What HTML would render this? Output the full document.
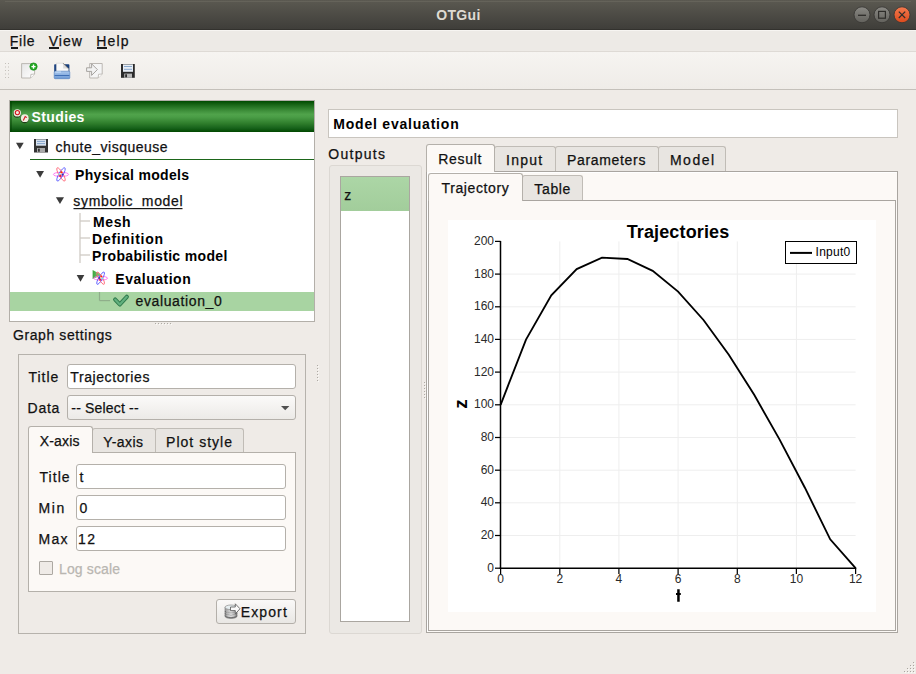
<!DOCTYPE html>
<html><head><meta charset="utf-8">
<style>
html,body{margin:0;padding:0;}
body{width:916px;height:674px;overflow:hidden;position:relative;background:#efebe7;font-family:"Liberation Sans",sans-serif;}
.abs{position:absolute;}
.t{position:absolute;white-space:pre;font-family:"Liberation Sans",sans-serif;}
.box{position:absolute;box-sizing:border-box;}
</style></head><body>
<!-- title bar -->
<div class="box" style="left:0;top:0;width:916px;height:30px;background:linear-gradient(#5b5951,#3e3d39);"></div><div class="box" style="left:5px;top:1px;width:906px;height:1px;background:#65635a;"></div><div class="box" style="left:0;top:29px;width:916px;height:1px;background:#33322e;"></div>
<!-- menubar -->
<div class="box" style="left:0;top:30px;width:916px;height:21px;background:#edeae6;border-top:1px solid #f7f5f2;"></div>
<div class="box" style="left:10.5px;top:47px;width:7px;height:1.5px;background:#1a1a1a;"></div>
<div class="box" style="left:49.2px;top:47px;width:9.6px;height:1.5px;background:#1a1a1a;"></div>
<div class="box" style="left:97px;top:47px;width:10px;height:1.5px;background:#1a1a1a;"></div>
<!-- toolbar -->
<div class="box" style="left:0;top:51px;width:916px;height:39px;background:linear-gradient(#f6f4f1,#efece8);border-top:1px solid #dedad5;border-bottom:1px solid #c4c0ba;"></div>

<!-- tree -->
<div class="box" style="left:9px;top:100px;width:306px;height:222px;background:#fff;border:1px solid #b3afa9;"></div>
<div class="box" style="left:10px;top:101px;width:304px;height:31px;background:linear-gradient(#004a00 0%,#1d6a1b 14%,#3f903b 32%,#50a34b 43%,#4a9d46 52%,#2f7e2c 72%,#16611a 88%,#004800 100%);"></div><div class="box" style="left:10px;top:101px;width:2px;height:31px;background:rgba(0,60,0,0.45);"></div>
<div class="box" style="left:30px;top:159px;width:284px;height:1px;background:#1d661a;"></div>
<div class="box" style="left:10px;top:292px;width:304px;height:19px;background:#a8d4a2;"></div>

<!-- groupbox -->
<div class="box" style="left:18px;top:354px;width:288px;height:280px;border:1px solid #b6b2ac;"></div>

<!-- right -->
<div class="box" style="left:328px;top:109px;width:570px;height:29px;background:#fff;border:1px solid #c9c5bf;"></div>


<!-- window buttons -->
<svg class="abs" style="left:846px;top:0" width="70" height="30" viewBox="846 0 70 30">
 <defs>
  <linearGradient id="gb" x1="0" y1="0" x2="0" y2="1"><stop offset="0" stop-color="#8a8984"/><stop offset="1" stop-color="#62615c"/></linearGradient>
  <linearGradient id="go" x1="0" y1="0" x2="0" y2="1"><stop offset="0" stop-color="#f47a4e"/><stop offset="1" stop-color="#dc4a1c"/></linearGradient>
 </defs>
 <circle cx="862" cy="14.8" r="8" fill="url(#gb)" stroke="#3a3935" stroke-width="0.9"/>
 <line x1="858" y1="15.3" x2="866" y2="15.3" stroke="#2e2d2a" stroke-width="1.3"/>
 <circle cx="882" cy="14.8" r="8" fill="url(#gb)" stroke="#3a3935" stroke-width="0.9"/>
 <rect x="878.6" y="11.4" width="6.8" height="6.8" fill="none" stroke="#2e2d2a" stroke-width="1.2"/>
 <circle cx="902" cy="14.8" r="8" fill="url(#go)" stroke="#3a3935" stroke-width="0.9"/>
 <path d="M898.8 11.6 L905.2 18 M905.2 11.6 L898.8 18" stroke="#2e2d2a" stroke-width="1.2"/>
</svg>
<!-- toolbar handle -->
<svg class="abs" style="left:0;top:60px" width="14" height="22" viewBox="0 60 14 22">
 <g fill="#c4c0ba"><rect x="5" y="63" width="1" height="1"/><rect x="5" y="66.5" width="1" height="1"/><rect x="5" y="70" width="1" height="1"/><rect x="5" y="73.5" width="1" height="1"/><rect x="5" y="77" width="1" height="1"/><rect x="8" y="63" width="1" height="1"/><rect x="8" y="66.5" width="1" height="1"/><rect x="8" y="70" width="1" height="1"/><rect x="8" y="73.5" width="1" height="1"/><rect x="8" y="77" width="1" height="1"/></g>
</svg>
<!-- toolbar icons -->
<svg class="abs" style="left:20px;top:62px" width="18" height="18" viewBox="20 62 18 18">
 <defs><linearGradient id="pg" x1="0" y1="0" x2="1" y2="1"><stop offset="0" stop-color="#e6e6e6"/><stop offset="1" stop-color="#ffffff"/></linearGradient></defs>
 <path d="M21.6 63.6 H34.6 V74 L30.6 78 H21.6 Z" fill="url(#pg)" stroke="#b5b1ab" stroke-width="0.9"/>
 <path d="M30.6 78 L30.9 74.4 L34.6 74" fill="#fff" stroke="#b5b1ab" stroke-width="0.8"/>
 <circle cx="33.5" cy="66.6" r="3.7" fill="#22a722" stroke="#138a13" stroke-width="0.6"/>
 <path d="M33.5 64.5 V68.7 M31.4 66.6 H35.6" stroke="#fff" stroke-width="1.4"/>
</svg>
<svg class="abs" style="left:52px;top:61px" width="20" height="20" viewBox="52 61 20 20">
 <defs><linearGradient id="fg" x1="0" y1="0" x2="0" y2="1"><stop offset="0" stop-color="#a9c8ee"/><stop offset="1" stop-color="#6b98d4"/></linearGradient></defs>
 <rect x="54.2" y="64.2" width="15.2" height="8" rx="0.8" fill="#173f7e"/>
 <path d="M56.4 63.2 H63.2 L68.4 68.6 V72 H56.4 Z" fill="#f9f9f9" stroke="#c8c8c8" stroke-width="0.5"/>
 <path d="M63.2 63.3 V68.6 H68.4 Z" fill="#d9d9d9"/>
 <path d="M63.2 63.3 L68.4 68.6" stroke="#4a4a4a" stroke-width="0.7"/>
 <rect x="54.2" y="71.2" width="15.6" height="7.5" rx="0.9" fill="url(#fg)" stroke="#4d7cbf" stroke-width="0.6"/>
 <line x1="54.6" y1="75.5" x2="69.4" y2="75.5" stroke="#3f6fb5" stroke-width="1"/>
 <line x1="55.2" y1="72" x2="61" y2="72" stroke="#d6ecff" stroke-width="0.8"/>
</svg>
<svg class="abs" style="left:85px;top:62px" width="19" height="18" viewBox="85 62 19 18">
 <path d="M89.7 63.5 H102.2 V74 L98.2 78 H89.7 Z" fill="#f5f5f5" stroke="#b5b1ab" stroke-width="0.9"/>
 <path d="M98.2 78 L98.5 74.3 L102.2 74" fill="#fff" stroke="#b5b1ab" stroke-width="0.8"/>
 <path d="M86.6 67.8 H91.6 V63.8 L97.4 69.6 L91.6 75.4 V71.4 H86.6 Z" fill="#f2f2f2" stroke="#9f9c97" stroke-width="0.9" stroke-linejoin="round"/>
</svg>
<svg class="abs" style="left:119px;top:62px" width="18" height="18" viewBox="119 62 18 18">
 <path d="M121 64 H134.8 V77.8 H121 Z" fill="#2b2b2b"/>
 <rect x="123" y="64.4" width="10" height="7.4" fill="#e8eef6"/>
 <line x1="124" y1="66.5" x2="132" y2="66.5" stroke="#7fa0c8" stroke-width="0.9"/>
 <line x1="124" y1="69.3" x2="132" y2="69.3" stroke="#7fa0c8" stroke-width="0.9"/>
 <rect x="124.2" y="73.6" width="7.8" height="4.2" fill="#b8b8b8"/>
 <rect x="125.2" y="74.3" width="1.8" height="3" fill="#2b2b2b"/>
</svg>

<!-- tree icons -->
<svg class="abs" style="left:10px;top:101px" width="304" height="220" viewBox="10 101 304 220">
 <!-- studies icon -->
 <circle cx="17.1" cy="113.8" r="3.9" fill="#1b2a14" opacity="0.8"/>
 <circle cx="17.3" cy="112.9" r="3.7" fill="#efeedf"/>
 <circle cx="17.4" cy="112.6" r="2.1" fill="none" stroke="#d4141e" stroke-width="1.1"/>
 <circle cx="24.6" cy="119.1" r="4.1" fill="#1b2a14" opacity="0.8"/>
 <circle cx="24.8" cy="118.2" r="3.9" fill="#efeedf"/>
 <path d="M23.3 120.4 L25.2 116.6 L26.8 117.6" fill="none" stroke="#d4141e" stroke-width="1.1"/>
 <!-- triangles -->
 <g fill="#3b3b3b">
  <path d="M16 142.8 H23.7 L19.85 149.3 Z"/>
  <path d="M36.2 171 H44 L40.1 177.7 Z"/>
  <path d="M55.9 197.3 H64 L59.95 203.9 Z"/>
  <path d="M76.7 275 H84.3 L80.5 281.8 Z"/>
 </g>
 <!-- floppy -->
 <path d="M34 139 H48 V152.5 H34 Z" fill="#333"/>
 <rect x="36" y="139.4" width="10" height="6.3" fill="#dbe4ef"/>
 <line x1="37" y1="141.4" x2="45" y2="141.4" stroke="#6f94c2" stroke-width="0.8"/>
 <line x1="37" y1="143.6" x2="45" y2="143.6" stroke="#6f94c2" stroke-width="0.8"/>
 <rect x="37" y="148" width="8" height="4.5" fill="#a9a9a9"/>
 <rect x="38" y="148.7" width="1.8" height="3" fill="#333"/>
 <!-- atom physical models -->
 <g fill="none" stroke-width="0.85">
  <ellipse cx="61" cy="174.4" rx="7.6" ry="2.1" stroke="#ff66ee"/>
  <ellipse cx="61" cy="174.4" rx="7.6" ry="2.1" stroke="#5a5aff" transform="rotate(-60 61 174.4)"/>
  <ellipse cx="61" cy="174.4" rx="7.6" ry="2.1" stroke="#ff6677" transform="rotate(60 61 174.4)"/>
 </g>
 <circle cx="61.3" cy="172.3" r="1.1" fill="#ff3300"/>
 <circle cx="59.5" cy="174.2" r="1.1" fill="#9be8f0"/>
 <circle cx="62.6" cy="174.6" r="1.1" fill="#2a2acc"/>
 <circle cx="60.4" cy="175.8" r="1.2" fill="#e02040"/>
 <!-- symbolic underline -->
 <rect x="73.5" y="208" width="109" height="1.2" fill="#1a1a1a"/>
 <!-- tree lines -->
 <g stroke="#cfcbc5" stroke-width="1.3">
  <line x1="80" y1="213" x2="80" y2="263"/>
  <line x1="80" y1="221" x2="90" y2="221"/>
  <line x1="80" y1="238" x2="90" y2="238"/>
  <line x1="80" y1="255" x2="90" y2="255"/>
 </g>
 <g stroke="#8fae8a" stroke-width="1.2">
  <line x1="99.5" y1="292" x2="99.5" y2="300.6"/>
  <line x1="99.5" y1="300.6" x2="110" y2="300.6"/>
 </g>
 <!-- evaluation icon -->
 <defs><linearGradient id="tg" x1="0" y1="0" x2="1" y2="0"><stop offset="0" stop-color="#3aa53a"/><stop offset="1" stop-color="#8fd08f"/></linearGradient></defs>
 <path d="M92.6 270 L92.6 279 L102 275 Z" fill="url(#tg)"/>
 <g fill="none" stroke-width="0.85">
  <ellipse cx="100.6" cy="278.2" rx="7" ry="1.9" stroke="#ff66ee"/>
  <ellipse cx="100.6" cy="278.2" rx="7" ry="1.9" stroke="#5a5aff" transform="rotate(-60 100.6 278.2)"/>
  <ellipse cx="100.6" cy="278.2" rx="7" ry="1.9" stroke="#ff6677" transform="rotate(60 100.6 278.2)"/>
 </g>
 <circle cx="101.2" cy="276.4" r="1.0" fill="#ff3300"/>
 <circle cx="99.3" cy="278" r="1.0" fill="#2a2acc"/>
 <circle cx="102.2" cy="278.4" r="1.0" fill="#7ad8f0"/>
 <circle cx="100.3" cy="279.6" r="1.1" fill="#e02040"/>
 <!-- check icon -->
 <polyline points="115.2,299.6 119.8,304.4 126.8,296.8" fill="none" stroke="#2f7a4c" stroke-width="4.2" stroke-linejoin="round" stroke-linecap="round"/>
 <polyline points="115.2,299.6 119.8,304.4 126.8,296.8" fill="none" stroke="#62b07e" stroke-width="2.2" stroke-linejoin="round" stroke-linecap="round"/>
</svg>
<!-- splitter dots -->
<svg class="abs" style="left:0;top:0" width="916" height="674" viewBox="0 0 916 674"><rect x="156" y="324" width="1" height="1" fill="#fbfaf8"/><rect x="155" y="323" width="1" height="1" fill="#aeaaa4"/><rect x="159" y="324" width="1" height="1" fill="#fbfaf8"/><rect x="158" y="323" width="1" height="1" fill="#aeaaa4"/><rect x="162" y="324" width="1" height="1" fill="#fbfaf8"/><rect x="161" y="323" width="1" height="1" fill="#aeaaa4"/><rect x="165" y="324" width="1" height="1" fill="#fbfaf8"/><rect x="164" y="323" width="1" height="1" fill="#aeaaa4"/><rect x="168" y="324" width="1" height="1" fill="#fbfaf8"/><rect x="167" y="323" width="1" height="1" fill="#aeaaa4"/><rect x="171" y="324" width="1" height="1" fill="#fbfaf8"/><rect x="170" y="323" width="1" height="1" fill="#aeaaa4"/><rect x="318" y="366" width="1" height="1" fill="#fbfaf8"/><rect x="317" y="365" width="1" height="1" fill="#aeaaa4"/><rect x="318" y="369" width="1" height="1" fill="#fbfaf8"/><rect x="317" y="368" width="1" height="1" fill="#aeaaa4"/><rect x="318" y="372" width="1" height="1" fill="#fbfaf8"/><rect x="317" y="371" width="1" height="1" fill="#aeaaa4"/><rect x="318" y="375" width="1" height="1" fill="#fbfaf8"/><rect x="317" y="374" width="1" height="1" fill="#aeaaa4"/><rect x="318" y="378" width="1" height="1" fill="#fbfaf8"/><rect x="317" y="377" width="1" height="1" fill="#aeaaa4"/><rect x="318" y="381" width="1" height="1" fill="#fbfaf8"/><rect x="317" y="380" width="1" height="1" fill="#aeaaa4"/><rect x="425" y="383" width="1" height="1" fill="#fbfaf8"/><rect x="424" y="382" width="1" height="1" fill="#aeaaa4"/><rect x="425" y="386" width="1" height="1" fill="#fbfaf8"/><rect x="424" y="385" width="1" height="1" fill="#aeaaa4"/><rect x="425" y="389" width="1" height="1" fill="#fbfaf8"/><rect x="424" y="388" width="1" height="1" fill="#aeaaa4"/><rect x="425" y="392" width="1" height="1" fill="#fbfaf8"/><rect x="424" y="391" width="1" height="1" fill="#aeaaa4"/><rect x="425" y="395" width="1" height="1" fill="#fbfaf8"/><rect x="424" y="394" width="1" height="1" fill="#aeaaa4"/><rect x="425" y="398" width="1" height="1" fill="#fbfaf8"/><rect x="424" y="397" width="1" height="1" fill="#aeaaa4"/></svg>
<!-- graph settings widgets -->
<div class="box" style="left:67px;top:364px;width:229px;height:25px;background:#fff;border:1px solid #b4b0aa;border-radius:3px;"></div>
<div class="box" style="left:67px;top:395px;width:229px;height:25px;background:linear-gradient(#fbfaf9,#eceae7);border:1px solid #b4b0aa;border-radius:3px;"></div>
<svg class="abs" style="left:280px;top:404px" width="10" height="8" viewBox="0 0 10 8"><path d="M1 2 H9.4 L5.2 6.3 Z" fill="#505050"/></svg>
<!-- tab pane -->
<div class="box" style="left:28px;top:452px;width:268px;height:140px;background:#fcf9f6;border:1px solid #b4b0aa;"></div>
<div class="box" style="left:92px;top:428px;width:64px;height:24px;background:#e8e5e1;border:1px solid #c0bcb6;border-bottom:none;border-radius:3px 3px 0 0;"></div>
<div class="box" style="left:155px;top:428px;width:89px;height:24px;background:#e8e5e1;border:1px solid #c0bcb6;border-bottom:none;border-radius:3px 3px 0 0;"></div>
<div class="box" style="left:28px;top:426px;width:65px;height:27px;background:#fcf9f6;border:1px solid #b4b0aa;border-bottom:none;border-radius:3px 3px 0 0;"></div>
<div class="box" style="left:76px;top:464px;width:210px;height:25px;background:#fff;border:1px solid #b4b0aa;border-radius:3px;"></div>
<div class="box" style="left:76px;top:495px;width:210px;height:25px;background:#fff;border:1px solid #b4b0aa;border-radius:3px;"></div>
<div class="box" style="left:76px;top:526px;width:210px;height:25px;background:#fff;border:1px solid #b4b0aa;border-radius:3px;"></div>
<div class="box" style="left:39px;top:561px;width:14px;height:14px;background:#efebe7;border:1px solid #aca8a2;border-radius:1px;"></div>
<!-- export button -->
<div class="box" style="left:216px;top:599px;width:80px;height:25px;background:linear-gradient(#faf9f8,#e9e7e4);border:1px solid #b4b0aa;border-radius:3px;"></div>
<svg class="abs" style="left:222px;top:601px" width="20" height="20" viewBox="222 601 20 20">
 <defs><linearGradient id="dbg" x1="0" y1="0" x2="1" y2="0"><stop offset="0" stop-color="#9a9a9a"/><stop offset="0.5" stop-color="#dcdcdc"/><stop offset="1" stop-color="#8a8a8a"/></linearGradient></defs>
 <path d="M225 607.3 V616.2 A6 2.3 0 0 0 237 616.2 V607.3 Z" fill="url(#dbg)" stroke="#6e6e6e" stroke-width="0.6"/>
 <g stroke="#5e5e5e" stroke-width="0.9" fill="none">
  <path d="M225.2 611.2 A5.8 2.1 0 0 0 236.8 611.2"/>
  <path d="M225.2 613.4 A5.8 2.1 0 0 0 236.8 613.4"/>
  <path d="M225.2 615.6 A5.8 2.1 0 0 0 236.8 615.6"/>
 </g>
 <g stroke="#f4f4f4" stroke-width="0.7" fill="none">
  <path d="M226.5 612.6 A5 1.6 0 0 0 235.5 612.6"/>
  <path d="M226.5 614.8 A5 1.6 0 0 0 235.5 614.8"/>
 </g>
 <ellipse cx="231" cy="607.3" rx="6" ry="2.3" fill="#e6eef0" stroke="#7a7a7a" stroke-width="0.6"/>
 <path d="M230.5 607 H235.3 V603.8 L240 608.8 L235.3 613.8 V610.6 H230.5 Z" fill="#fafafa" stroke="#555" stroke-width="0.8" stroke-linejoin="round"/>
</svg>

<!-- outputs frame -->
<div class="box" style="left:329px;top:165px;width:93px;height:469px;background:#ebe8e4;border:1px solid #dcd8d3;border-radius:3px;"></div>
<div class="box" style="left:340px;top:176px;width:70px;height:446px;background:#fff;border:1px solid #aaa6a0;"></div>
<div class="box" style="left:341px;top:177px;width:68px;height:34px;background:linear-gradient(#acd6a6,#a2cd9b);"></div>

<!-- outer tabs -->
<div class="box" style="left:426px;top:171px;width:472px;height:462px;background:#fcf9f6;border:1px solid #a9a5a0;box-shadow:inset 1px 1px 0 #fff;"></div>
<div class="box" style="left:494px;top:146px;width:62px;height:25px;background:#e8e5e1;border:1px solid #c0bcb6;border-bottom:none;border-radius:3px 3px 0 0;"></div>
<div class="box" style="left:555px;top:146px;width:104px;height:25px;background:#e8e5e1;border:1px solid #c0bcb6;border-bottom:none;border-radius:3px 3px 0 0;"></div>
<div class="box" style="left:658px;top:146px;width:68px;height:25px;background:#e8e5e1;border:1px solid #c0bcb6;border-bottom:none;border-radius:3px 3px 0 0;"></div>
<div class="box" style="left:426px;top:144px;width:69px;height:28px;background:#fcf9f6;border:1px solid #b4b0aa;border-bottom:none;border-radius:3px 3px 0 0;"></div>
<!-- inner tabs -->
<div class="box" style="left:428px;top:200px;width:468px;height:431px;background:#fcf9f6;border:1px solid #a9a5a0;"></div>
<div class="box" style="left:522px;top:175px;width:61px;height:25px;background:#e8e5e1;border:1px solid #c0bcb6;border-bottom:none;border-radius:3px 3px 0 0;"></div>
<div class="box" style="left:428px;top:173px;width:95px;height:28px;background:#fcf9f6;border:1px solid #b4b0aa;border-bottom:none;border-radius:3px 3px 0 0;"></div>
<!-- plot area -->
<div class="box" style="left:448px;top:220px;width:428px;height:392px;background:#fff;"></div>

<!-- size grip -->
<svg class="abs" style="left:900px;top:656px" width="16" height="18" viewBox="900 656 16 18"><rect x="914" y="663" width="1" height="1" fill="#fbfaf8"/><rect x="913" y="662" width="1" height="1" fill="#a9a59f"/><rect x="911" y="666" width="1" height="1" fill="#fbfaf8"/><rect x="910" y="665" width="1" height="1" fill="#a9a59f"/><rect x="914" y="666" width="1" height="1" fill="#fbfaf8"/><rect x="913" y="665" width="1" height="1" fill="#a9a59f"/><rect x="908" y="669" width="1" height="1" fill="#fbfaf8"/><rect x="907" y="668" width="1" height="1" fill="#a9a59f"/><rect x="911" y="669" width="1" height="1" fill="#fbfaf8"/><rect x="910" y="668" width="1" height="1" fill="#a9a59f"/><rect x="914" y="669" width="1" height="1" fill="#fbfaf8"/><rect x="913" y="668" width="1" height="1" fill="#a9a59f"/><rect x="905" y="672" width="1" height="1" fill="#fbfaf8"/><rect x="904" y="671" width="1" height="1" fill="#a9a59f"/><rect x="908" y="672" width="1" height="1" fill="#fbfaf8"/><rect x="907" y="671" width="1" height="1" fill="#a9a59f"/><rect x="911" y="672" width="1" height="1" fill="#fbfaf8"/><rect x="910" y="671" width="1" height="1" fill="#a9a59f"/><rect x="914" y="672" width="1" height="1" fill="#fbfaf8"/><rect x="913" y="671" width="1" height="1" fill="#a9a59f"/></svg>


<svg class='abs' style='left:0;top:0' width='916' height='674' viewBox='0 0 916 674'>
<g stroke='#eeeeee' stroke-width='1'><line x1='559.8' y1='241.4' x2='559.8' y2='568.2'/><line x1='618.9' y1='241.4' x2='618.9' y2='568.2'/><line x1='678.1' y1='241.4' x2='678.1' y2='568.2'/><line x1='737.3' y1='241.4' x2='737.3' y2='568.2'/><line x1='796.4' y1='241.4' x2='796.4' y2='568.2'/><line x1='500.6' y1='535.5' x2='855.6' y2='535.5'/><line x1='500.6' y1='502.8' x2='855.6' y2='502.8'/><line x1='500.6' y1='470.2' x2='855.6' y2='470.2'/><line x1='500.6' y1='437.5' x2='855.6' y2='437.5'/><line x1='500.6' y1='404.8' x2='855.6' y2='404.8'/><line x1='500.6' y1='372.1' x2='855.6' y2='372.1'/><line x1='500.6' y1='339.4' x2='855.6' y2='339.4'/><line x1='500.6' y1='306.8' x2='855.6' y2='306.8'/><line x1='500.6' y1='274.1' x2='855.6' y2='274.1'/></g>
<g stroke='#000' stroke-width='1.25'><line x1='495' y1='568.2' x2='500.6' y2='568.2'/><line x1='495' y1='535.5' x2='500.6' y2='535.5'/><line x1='495' y1='502.8' x2='500.6' y2='502.8'/><line x1='495' y1='470.2' x2='500.6' y2='470.2'/><line x1='495' y1='437.5' x2='500.6' y2='437.5'/><line x1='495' y1='404.8' x2='500.6' y2='404.8'/><line x1='495' y1='372.1' x2='500.6' y2='372.1'/><line x1='495' y1='339.4' x2='500.6' y2='339.4'/><line x1='495' y1='306.8' x2='500.6' y2='306.8'/><line x1='495' y1='274.1' x2='500.6' y2='274.1'/><line x1='495' y1='241.4' x2='500.6' y2='241.4'/><line x1='500.6' y1='568.2' x2='500.6' y2='574'/><line x1='559.8' y1='568.2' x2='559.8' y2='574'/><line x1='618.9' y1='568.2' x2='618.9' y2='574'/><line x1='678.1' y1='568.2' x2='678.1' y2='574'/><line x1='737.3' y1='568.2' x2='737.3' y2='574'/><line x1='796.4' y1='568.2' x2='796.4' y2='574'/><line x1='855.6' y1='568.2' x2='855.6' y2='574'/></g>
<line x1='500.5' y1='241' x2='500.5' y2='568.9' stroke='#000' stroke-width='1.5'/>
<line x1='499.8' y1='568.3' x2='856.3' y2='568.3' stroke='#000' stroke-width='1.5'/>
<polyline points='500.6,404.8 526.0,339.6 551.3,295.4 576.7,269.1 602.0,257.7 627.4,259.0 652.7,270.8 678.1,291.6 703.5,320.0 728.8,354.7 754.2,394.8 779.5,439.4 804.9,487.7 830.2,539.3 855.6,568.2' fill='none' stroke='#000' stroke-width='1.85' stroke-linejoin='miter'/>
<g font-family='Liberation Sans' font-size='12' fill='#2a2a2a'><text x='494' y='571.7' text-anchor='end'>0</text><text x='494' y='539.0' text-anchor='end'>20</text><text x='494' y='506.3' text-anchor='end'>40</text><text x='494' y='473.7' text-anchor='end'>60</text><text x='494' y='441.0' text-anchor='end'>80</text><text x='494' y='408.3' text-anchor='end'>100</text><text x='494' y='375.6' text-anchor='end'>120</text><text x='494' y='342.9' text-anchor='end'>140</text><text x='494' y='310.3' text-anchor='end'>160</text><text x='494' y='277.6' text-anchor='end'>180</text><text x='494' y='244.9' text-anchor='end'>200</text><text x='500.6' y='582.8' text-anchor='middle'>0</text><text x='559.8' y='582.8' text-anchor='middle'>2</text><text x='618.9' y='582.8' text-anchor='middle'>4</text><text x='678.1' y='582.8' text-anchor='middle'>6</text><text x='737.3' y='582.8' text-anchor='middle'>8</text><text x='796.4' y='582.8' text-anchor='middle'>10</text><text x='855.6' y='582.8' text-anchor='middle'>12</text></g>
<rect x='785.5' y='241.5' width='71' height='22' fill='#fff' stroke='#000' stroke-width='1'/>
<line x1='790' y1='252.9' x2='812' y2='252.9' stroke='#000' stroke-width='2'/>
<path d='M677.2 589.3 H679.7 V601.7 H677.2 Z M676 593.1 H680.8 V594.9 H676 Z' fill='#000'/>
<text transform='translate(467.1 403.9) rotate(-90)' x='0' y='0' text-anchor='middle' font-family='Liberation Sans' font-weight='bold' font-size='19' fill='#000'>z</text>
</svg>
<div class='t' style='left:436.2px;top:7.85px;font-size:14px;line-height:14px;font-weight:700;color:#dfdbd2;letter-spacing:0.330px;'>OTGui</div>
<div class='t' style='left:9.7px;top:33.75px;font-size:14px;line-height:14px;font-weight:400;color:#111;letter-spacing:0.779px;-webkit-text-stroke:0.25px currentColor;'>File</div>
<div class='t' style='left:48.7px;top:33.75px;font-size:14px;line-height:14px;font-weight:400;color:#111;letter-spacing:1.002px;-webkit-text-stroke:0.25px currentColor;'>View</div>
<div class='t' style='left:96.3px;top:33.75px;font-size:14px;line-height:14px;font-weight:400;color:#111;letter-spacing:1.168px;-webkit-text-stroke:0.25px currentColor;'>Help</div>
<div class='t' style='left:31.6px;top:110.05px;font-size:14px;line-height:14px;font-weight:700;color:#ffffff;letter-spacing:0.370px;'>Studies</div>
<div class='t' style='left:55.5px;top:139.95px;font-size:14px;line-height:14px;font-weight:400;color:#111;letter-spacing:0.502px;-webkit-text-stroke:0.25px currentColor;'>chute_visqueuse</div>
<div class='t' style='left:75.1px;top:168.45px;font-size:14px;line-height:14px;font-weight:700;color:#000;letter-spacing:0.299px;'>Physical models</div>
<div class='t' style='left:73.3px;top:194.05px;font-size:14px;line-height:14px;font-weight:400;color:#111;letter-spacing:0.694px;-webkit-text-stroke:0.25px currentColor;'>symbolic_model</div>
<div class='t' style='left:93.1px;top:214.95px;font-size:14px;line-height:14px;font-weight:700;color:#000;letter-spacing:0.568px;'>Mesh</div>
<div class='t' style='left:92.1px;top:232.15px;font-size:14px;line-height:14px;font-weight:700;color:#000;letter-spacing:0.706px;'>Definition</div>
<div class='t' style='left:92.1px;top:249.15px;font-size:14px;line-height:14px;font-weight:700;color:#000;letter-spacing:0.337px;'>Probabilistic model</div>
<div class='t' style='left:115.3px;top:271.75px;font-size:14px;line-height:14px;font-weight:700;color:#000;letter-spacing:0.511px;'>Evaluation</div>
<div class='t' style='left:135.5px;top:294.15px;font-size:14px;line-height:14px;font-weight:400;color:#111;letter-spacing:0.627px;-webkit-text-stroke:0.25px currentColor;'>evaluation_0</div>
<div class='t' style='left:12.9px;top:328.45px;font-size:14px;line-height:14px;font-weight:400;color:#111;letter-spacing:0.603px;-webkit-text-stroke:0.25px currentColor;'>Graph settings</div>
<div class='t' style='left:28.5px;top:369.75px;font-size:14px;line-height:14px;font-weight:400;color:#111;letter-spacing:0.991px;-webkit-text-stroke:0.25px currentColor;'>Title</div>
<div class='t' style='left:70.3px;top:369.75px;font-size:14px;line-height:14px;font-weight:400;color:#111;letter-spacing:0.589px;-webkit-text-stroke:0.25px currentColor;'>Trajectories</div>
<div class='t' style='left:27.5px;top:400.75px;font-size:14px;line-height:14px;font-weight:400;color:#111;letter-spacing:0.774px;-webkit-text-stroke:0.25px currentColor;'>Data</div>
<div class='t' style='left:71.3px;top:400.75px;font-size:14px;line-height:14px;font-weight:400;color:#111;letter-spacing:0.178px;-webkit-text-stroke:0.25px currentColor;'>-- Select --</div>
<div class='t' style='left:39.7px;top:433.95px;font-size:14px;line-height:14px;font-weight:400;color:#111;letter-spacing:0.199px;-webkit-text-stroke:0.25px currentColor;'>X-axis</div>
<div class='t' style='left:103.3px;top:434.55px;font-size:14px;line-height:14px;font-weight:400;color:#111;letter-spacing:0.415px;-webkit-text-stroke:0.25px currentColor;'>Y-axis</div>
<div class='t' style='left:166.1px;top:434.55px;font-size:14px;line-height:14px;font-weight:400;color:#111;letter-spacing:1.010px;-webkit-text-stroke:0.25px currentColor;'>Plot style</div>
<div class='t' style='left:39.5px;top:470.15px;font-size:14px;line-height:14px;font-weight:400;color:#111;letter-spacing:1.041px;-webkit-text-stroke:0.25px currentColor;'>Title</div>
<div class='t' style='left:79.4px;top:470.15px;font-size:14px;line-height:14px;font-weight:400;color:#111;letter-spacing:0.000px;-webkit-text-stroke:0.25px currentColor;'>t</div>
<div class='t' style='left:38.5px;top:500.85px;font-size:14px;line-height:14px;font-weight:400;color:#111;letter-spacing:1.669px;-webkit-text-stroke:0.25px currentColor;'>Min</div>
<div class='t' style='left:79.4px;top:500.85px;font-size:14px;line-height:14px;font-weight:400;color:#111;letter-spacing:0.000px;-webkit-text-stroke:0.25px currentColor;'>0</div>
<div class='t' style='left:38.5px;top:532.05px;font-size:14px;line-height:14px;font-weight:400;color:#111;letter-spacing:1.223px;-webkit-text-stroke:0.25px currentColor;'>Max</div>
<div class='t' style='left:78.1px;top:532.05px;font-size:14px;line-height:14px;font-weight:400;color:#111;letter-spacing:1.322px;-webkit-text-stroke:0.25px currentColor;'>12</div>
<div class='t' style='left:59.0px;top:561.55px;font-size:14px;line-height:14px;font-weight:400;color:#b9b6b1;letter-spacing:0.133px;-webkit-text-stroke:0.25px currentColor;'>Log scale</div>
<div class='t' style='left:240.7px;top:604.55px;font-size:14px;line-height:14px;font-weight:400;color:#111;letter-spacing:1.126px;-webkit-text-stroke:0.25px currentColor;'>Export</div>
<div class='t' style='left:333.3px;top:116.85px;font-size:14px;line-height:14px;font-weight:700;color:#000;letter-spacing:0.788px;'>Model evaluation</div>
<div class='t' style='left:328.3px;top:147.35px;font-size:14px;line-height:14px;font-weight:400;color:#111;letter-spacing:1.278px;-webkit-text-stroke:0.25px currentColor;'>Outputs</div>
<div class='t' style='left:344.2px;top:188.15px;font-size:14px;line-height:14px;font-weight:400;color:#111;letter-spacing:0.000px;-webkit-text-stroke:0.25px currentColor;'>z</div>
<div class='t' style='left:438.3px;top:152.05px;font-size:14px;line-height:14px;font-weight:400;color:#111;letter-spacing:0.683px;-webkit-text-stroke:0.25px currentColor;'>Result</div>
<div class='t' style='left:506.1px;top:153.45px;font-size:14px;line-height:14px;font-weight:400;color:#111;letter-spacing:1.240px;-webkit-text-stroke:0.25px currentColor;'>Input</div>
<div class='t' style='left:566.9px;top:153.45px;font-size:14px;line-height:14px;font-weight:400;color:#111;letter-spacing:0.682px;-webkit-text-stroke:0.25px currentColor;'>Parameters</div>
<div class='t' style='left:669.9px;top:153.45px;font-size:14px;line-height:14px;font-weight:400;color:#111;letter-spacing:1.540px;-webkit-text-stroke:0.25px currentColor;'>Model</div>
<div class='t' style='left:441.5px;top:181.15px;font-size:14px;line-height:14px;font-weight:400;color:#111;letter-spacing:0.620px;-webkit-text-stroke:0.25px currentColor;'>Trajectory</div>
<div class='t' style='left:534.3px;top:182.15px;font-size:14px;line-height:14px;font-weight:400;color:#111;letter-spacing:0.658px;-webkit-text-stroke:0.25px currentColor;'>Table</div>
<div class='t' style='left:626.7px;top:222.66px;font-size:18px;line-height:18px;font-weight:700;color:#000;letter-spacing:0.131px;'>Trajectories</div>
<div class='t' style='left:815.6px;top:245.94px;font-size:12px;line-height:12px;font-weight:400;color:#000;letter-spacing:0.245px;'>Input0</div>
</body></html>
